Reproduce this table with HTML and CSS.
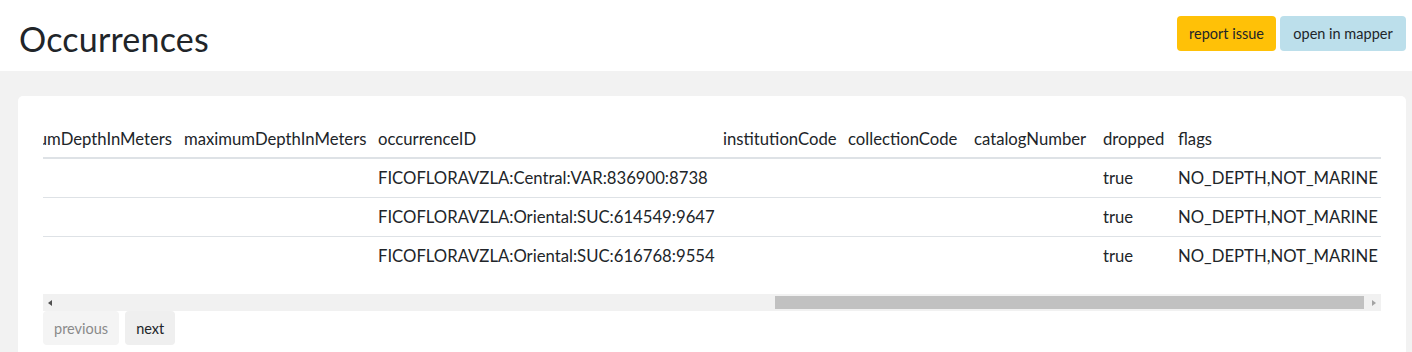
FILE: index.html
```html
<!DOCTYPE html>
<html lang="en">
<head>
<meta charset="utf-8">
<title>Occurrences</title>
<link rel="stylesheet" href="styles.css">
</head>
<body>
<header class="topbar">
  <h1 class="title">Occurrences</h1>
  <div class="actions">
    <button class="btn btn-warning">report issue</button>
    <button class="btn btn-info">open in mapper</button>
  </div>
</header>
<main class="page">
  <section class="card">
    <div class="scroller">
      <table class="table">
        <colgroup>
          <col class="c-min"><col class="c-max"><col class="c-occ"><col class="c-inst">
          <col class="c-coll"><col class="c-cat"><col class="c-drop"><col class="c-flags">
        </colgroup>
        <thead>
          <tr>
            <th>minimumDepthInMeters</th><th>maximumDepthInMeters</th><th>occurrenceID</th><th>institutionCode</th>
            <th>collectionCode</th><th>catalogNumber</th><th>dropped</th><th>flags</th>
          </tr>
        </thead>
        <tbody>
          <tr>
            <td></td><td></td><td>FICOFLORAVZLA:Central:VAR:836900:8738</td><td></td>
            <td></td><td></td><td>true</td><td>NO_DEPTH,NOT_MARINE</td>
          </tr>
          <tr>
            <td></td><td></td><td>FICOFLORAVZLA:Oriental:SUC:614549:9647</td><td></td>
            <td></td><td></td><td>true</td><td>NO_DEPTH,NOT_MARINE</td>
          </tr>
          <tr>
            <td></td><td></td><td>FICOFLORAVZLA:Oriental:SUC:616768:9554</td><td></td>
            <td></td><td></td><td>true</td><td>NO_DEPTH,NOT_MARINE</td>
          </tr>
        </tbody>
      </table>
    </div>
    <div class="hbar" aria-hidden="true">
      <span class="hbar-btn"><span class="tri tri-left"></span></span>
      <span class="hbar-track"><span class="hbar-thumb"></span></span>
      <span class="hbar-btn"><span class="tri tri-right"></span></span>
    </div>
    <nav class="pager">
      <button class="pg pg-disabled">previous</button>
      <button class="pg">next</button>
    </nav>
  </section>
</main>
</body>
</html>
```
FILE: styles.css
```css
html, body {
  margin: 0;
  padding: 0;
}
body {
  background: #f2f2f2;
  color: #212529;
  font-family: Lato, "Open Sans", sans-serif;
  font-size: 16px;
}
.topbar {
  background: #ffffff;
  height: 71px;
  display: flex;
  align-items: flex-start;
  justify-content: space-between;
  padding: 0 6px 0 19px;
  box-sizing: border-box;
}
.title {
  margin: 19px 0 0 0;
  font-weight: 400;
  font-size: 34px;
  line-height: 40px;
  letter-spacing: 0.2px;
}
.actions {
  display: flex;
  gap: 4px;
  margin-top: 16px;
}
.btn {
  border: 0;
  border-radius: 4px;
  height: 35px;
  padding: 0 11px;
  font-family: Lato, "Open Sans", sans-serif;
  font-size: 14.5px;
  color: #212529;
  cursor: pointer;
}
.btn-warning { background: #ffc107; width: 99px; }
.btn-info { background: #bcdfeb; width: 126px; }
.page {
  padding: 25px 6px 0 18px;
}
.card {
  background: #ffffff;
  border-radius: 5px;
  padding: 24px 25px 12px 25px;
}
.scroller {
  overflow: hidden;
  direction: rtl;
}
.table {
  direction: ltr;
  border-collapse: collapse;
  table-layout: fixed;
  width: 1394px;
  margin-bottom: 19px;
  font-size: 16.7px;
}
.table th, .table td {
  padding: 8px 6px;
  line-height: 22px;
  text-align: left;
  white-space: nowrap;
  overflow: hidden;
  font-weight: 400;
}
.table thead th {
  padding-bottom: 7px;
  border-bottom: 2px solid #dee2e6;
}
.table tbody tr + tr td {
  border-top: 1px solid #dee2e6;
}
.c-min { width: 191px; }
.c-max { width: 194px; }
.c-occ { width: 345px; }
.c-inst { width: 125px; }
.c-coll { width: 126px; }
.c-cat { width: 129px; }
.c-drop { width: 75px; }
.c-flags { width: 209px; }
.hbar {
  display: flex;
  height: 17px;
  background: #f1f1f1;
}
.hbar-btn {
  width: 17px;
  flex: none;
  display: flex;
  align-items: center;
  justify-content: center;
}
.tri {
  width: 0;
  height: 0;
  border-top: 3.5px solid transparent;
  border-bottom: 3.5px solid transparent;
}
.tri-left {
  border-right: 4px solid #505050;
  margin-right: 3px;
}
.tri-right {
  border-left: 4px solid #a3a3a3;
  margin-left: 3px;
}
.hbar-track {
  flex: 1;
  display: flex;
  justify-content: flex-end;
  align-items: center;
}
.hbar-thumb {
  width: 589px;
  height: 13px;
  background: #c1c1c1;
}
.pager {
  display: flex;
  gap: 6px;
}
.pg {
  border: 0;
  border-radius: 4px;
  height: 34px;
  padding: 0 11px;
  background: #efefef;
  color: #212529;
  font-family: Lato, "Open Sans", sans-serif;
  font-size: 14.5px;
}
.pg-disabled {
  background: #f4f4f4;
  color: #8a8a8a;
}
```
